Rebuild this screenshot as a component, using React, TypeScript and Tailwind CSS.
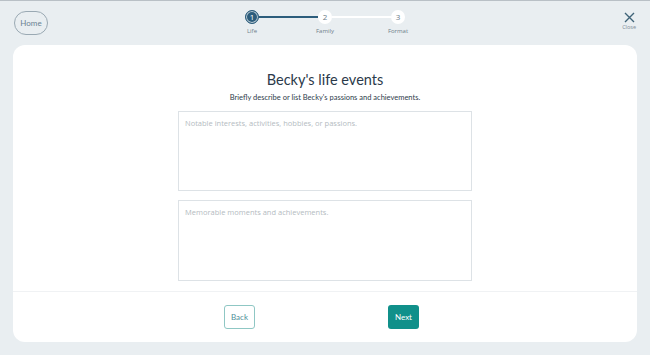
import React, { useState } from 'react';

const steps = [
  { n: 1, label: 'Life' },
  { n: 2, label: 'Family' },
  { n: 3, label: 'Format' },
];

const Stepper: React.FC<{ current: number }> = ({ current }) => (
  <div className="flex items-start">
    {steps.map((s, i) => (
      <React.Fragment key={s.n}>
        <div className="flex flex-col items-center w-[14px]">
          <div
            className={`w-[14px] h-[14px] rounded-full flex items-center justify-center text-[8px] leading-none ${
              s.n === current
                ? 'bg-[#2c5d7c] text-white ring-1 ring-inset ring-white/70 border border-[#2c5d7c]'
                : 'bg-white text-[#6b7c88]'
            }`}
          >
            {s.n}
          </div>
          <span className="mt-[4px] text-[6px] leading-none text-[#6f7f8a] whitespace-nowrap">{s.label}</span>
        </div>
        {i < steps.length - 1 && (
          <div className={`w-[59px] h-[2px] mt-[6px] ${s.n === current ? 'bg-[#2c5d7c]' : 'bg-white'}`} />
        )}
      </React.Fragment>
    ))}
  </div>
);

export default function App() {
  const [interests, setInterests] = useState('');
  const [moments, setMoments] = useState('');

  return (
    <div className="w-[650px] h-[355px] bg-[#e9eef1] border-t border-[#b9c0c6] font-['Open_Sans',sans-serif] overflow-hidden">
      <header className="h-[44px] flex items-start relative">
        <button className="ml-[14px] mt-[10px] w-[34px] h-[24px] rounded-full border border-[#9aa9b3] text-[8px] text-[#6a8292] font-['Lato',sans-serif]">
          Home
        </button>
        <div className="absolute left-[245px] top-[9px]">
          <Stepper current={1} />
        </div>
        <button className="ml-auto mr-[14px] mt-[11px] flex flex-col items-center text-[#3f6378]">
          <svg width="11" height="11" viewBox="0 0 11 11" fill="none" stroke="currentColor" strokeWidth="1.4">
            <path d="M1 1L10 10M10 1L1 10" />
          </svg>
          <span className="mt-[2px] text-[5.5px] leading-none text-[#7d8c96]">Close</span>
        </button>
      </header>

      <main className="mx-[13px] h-[297px] bg-white rounded-[12px] flex flex-col">
        <div className="flex flex-col items-center flex-1">
          <h1 className="mt-[26px] text-[14.5px] leading-[18px] text-[#2b3a4a] font-['Lato',sans-serif]">
            Becky's life events
          </h1>
          <p className="mt-[3px] text-[7.5px] leading-[11px] text-[#2e3d4b] font-['Lato',sans-serif]">
            Briefly describe or list Becky's passions and achievements.
          </p>
          <textarea
            value={interests}
            onChange={(e) => setInterests(e.target.value)}
            placeholder="Notable interests, activities, hobbies, or passions."
            className="mt-[8px] w-[294px] h-[80px] resize-none border border-[#dde2e6] px-[6px] py-[6px] text-[7.5px] leading-[11px] placeholder:text-[#b4bbc1] outline-none"
          />
          <textarea
            value={moments}
            onChange={(e) => setMoments(e.target.value)}
            placeholder="Memorable moments and achievements."
            className="mt-[9px] w-[294px] h-[81px] resize-none border border-[#dde2e6] px-[6px] py-[6px] text-[7.5px] leading-[11px] placeholder:text-[#b4bbc1] outline-none"
          />
        </div>
        <div className="h-[51px] border-t border-[#f0f2f4] flex items-start justify-center gap-[133px] pr-[7px]">
          <button className="mt-[13px] w-[31px] h-[24px] rounded-[3px] border border-[#8fc7c4] text-[8px] text-[#4f8f98] font-['Lato',sans-serif]">
            Back
          </button>
          <button className="mt-[13px] w-[31px] h-[24px] rounded-[3px] bg-[#10908a] text-[8px] text-white font-['Lato',sans-serif]">
            Next
          </button>
        </div>
      </main>
    </div>
  );
}
